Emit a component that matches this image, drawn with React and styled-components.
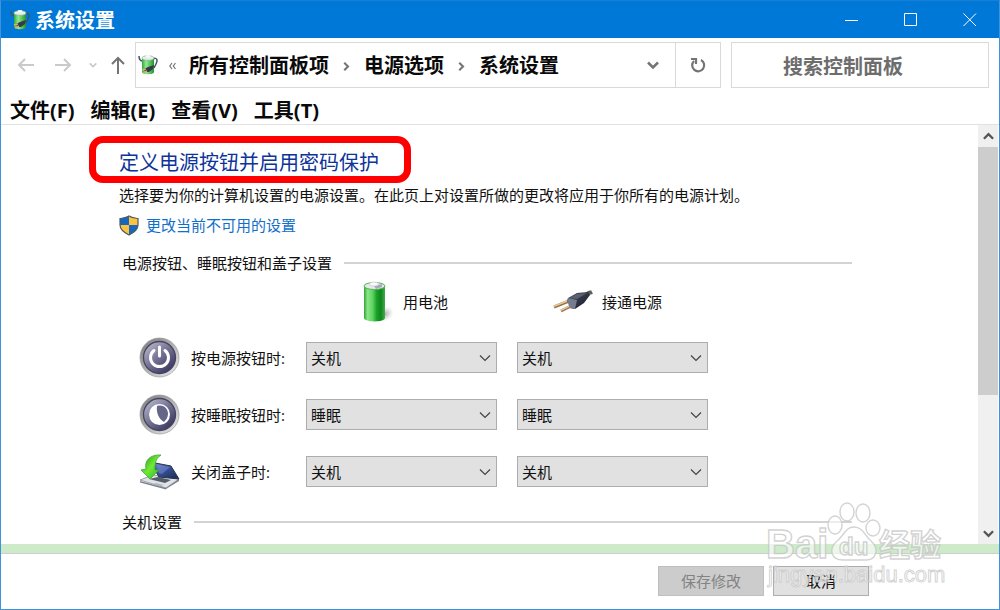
import styled, { createGlobalStyle } from 'styled-components';

const GlobalStyle = createGlobalStyle`
  * { box-sizing: border-box; }

  body {
    margin: 0;
    background: #fff;
    color: #111;
    font-family: 'Open Sans', 'Noto Sans CJK SC', sans-serif;
    font-size: 15px;
    line-height: 24px;
  }

  button, input, select { font: inherit; color: inherit; }
  svg { display: block; flex-shrink: 0; }
`;

const Window = styled.div`
  position: relative;
  display: flex;
  flex-direction: column;
  height: 100vh;
  border: 1px solid #3f93da;
  border-top-color: #1a7fd3;
`;

const TitleBar = styled.header`
  display: flex;
  align-items: center;
  height: 37px;
  flex-shrink: 0;
  padding-left: 9px;
  background: #0078d7;
  color: #fff;
`;

const Title = styled.h1`
  flex: 1;
  margin: 0;
  padding: 2px 0 0 5px;
  font-size: 20px;
  font-weight: 700;
`;

const WindowButton = styled.button`
  display: flex;
  align-items: center;
  justify-content: center;
  width: 59px;
  height: 37px;
  padding: 0;
  border: 0;
  background: none;
`;

const Toolbar = styled.div`
  display: flex;
  align-items: center;
  flex-shrink: 0;
  padding: 4px 10px 0 12px;
`;

const NavButton = styled.button`
  display: flex;
  align-items: center;
  justify-content: center;
  width: ${(p) => p.$width || 24}px;
  height: 32px;
  margin-right: ${(p) => p.$gap || 0}px;
  padding: 0;
  border: 0;
  background: none;
  color: ${(p) => (p.disabled ? '#cacaca' : '#747474')};
`;

const AddressBar = styled.div`
  display: flex;
  align-items: center;
  flex: 1;
  height: 46px;
  margin-left: 5px;
  padding-left: 2px;
  border: 1px solid #d9d9d9;
`;

const Crumbs = styled.nav`
  display: flex;
  align-items: center;
  flex: 1;
  gap: 13px;
  padding: 2px 0 0 11px;
  color: #747474;
`;

const Crumb = styled.a`
  color: #0a0a0a;
  font-size: 20px;
  font-weight: 700;
  text-decoration: none;
  white-space: nowrap;
`;

const RefreshButton = styled.button`
  display: flex;
  align-items: center;
  justify-content: center;
  width: 45px;
  height: 44px;
  padding: 0;
  border: 0;
  border-left: 1px solid #d9d9d9;
  background: none;
`;

const SearchInput = styled.input`
  width: 258px;
  height: 46px;
  margin-left: 10px;
  padding: 2px 0 0 51px;
  border: 1px solid #d9d9d9;
  background: #fff;
  font-size: 20px;
  font-weight: 700;

  &::placeholder { color: #6d6d6d; opacity: 1; }
`;

const MenuBar = styled.div`
  display: flex;
  flex-shrink: 0;
  gap: 16px;
  padding: 11px 9px 1px;
  border-bottom: 1px solid #e2e2e2;
`;

const MenuItem = styled.button`
  padding: 0;
  border: 0;
  background: none;
  color: #0a0a0a;
  font-size: 20px;
  font-weight: 700;
  line-height: 24px;
`;

const Body = styled.div`
  display: flex;
  flex: 1;
  min-height: 0;
`;

const Main = styled.main`
  flex: 1;
  overflow: hidden;
  padding: 11px 126px 0 118px;
`;

const Heading = styled.h2`
  width: fit-content;
  margin: 0 0 0 -30px;
  padding: 8px 25px 1px 23px;
  border: 7px solid #fe0000;
  border-radius: 14px;
  color: #0d3499;
  font-size: 20px;
  font-weight: 400;
  line-height: 24px;
`;

const Description = styled.p`
  margin: 0;
`;

const ShieldLink = styled.a`
  display: flex;
  align-items: center;
  gap: 7px;
  width: fit-content;
  margin-top: 6px;
  color: #0f6fcb;
  text-decoration: none;
`;

const SectionTitle = styled.h3`
  display: flex;
  align-items: center;
  gap: 12px;
  margin: ${(p) => p.$top}px 0 0 3px;
  font-size: 15px;
  font-weight: 400;

  &::after {
    content: '';
    flex: 1;
    height: 2px;
    background: #d3d3d3;
  }
`;

const Settings = styled.div`
  display: grid;
  grid-template-columns: 52px 115px 191px 211px;
  grid-template-rows: 54px;
  grid-auto-rows: 57px;
  align-items: center;
  margin-left: 20px;
`;

const SourceLabel = styled.div`
  display: flex;
  align-items: center;
  grid-column: ${(p) => p.$column};
  gap: 9px;
  padding-left: 56px;
`;

const SelectBox = styled.div`
  position: relative;
  margin-left: ${(p) => (p.$second ? 20 : 0)}px;

  svg {
    position: absolute;
    top: 10px;
    right: 6px;
    pointer-events: none;
  }
`;

const Select = styled.select`
  display: block;
  width: 100%;
  height: 31px;
  padding: 0 24px 0 4px;
  border: 1px solid #adadad;
  border-radius: 0;
  background: #e1e1e1;
  appearance: none;
`;

const ScrollBar = styled.div`
  display: flex;
  flex-direction: column;
  width: 20px;
  margin-right: 1px;
  background: #f0f0f0;
`;

const ScrollButton = styled.button`
  display: flex;
  align-items: center;
  justify-content: center;
  height: 22px;
  padding: 0;
  border: 0;
  background: none;
`;

const ScrollTrack = styled.div`
  flex: 1;
`;

const ScrollThumb = styled.div`
  height: 66%;
  background: #cdcdcd;
`;

const GreenStrip = styled.div`
  flex-shrink: 0;
  height: 10px;
  border-bottom: 1px solid #c9d2c8;
  background: #cdebc9;
`;

const Footer = styled.footer`
  display: flex;
  justify-content: flex-end;
  flex-shrink: 0;
  gap: 9px;
  padding: 12px 130px 13px 0;
`;

const FooterButton = styled.button`
  width: ${(p) => p.$width}px;
  height: 30px;
  padding: 0;
  border: 1px solid ${(p) => (p.disabled ? '#bfbfbf' : '#adadad')};
  background: ${(p) => (p.disabled ? '#cccccc' : '#e1e1e1')};
  color: ${(p) => (p.disabled ? '#838383' : '#111')};
`;

const Watermark = styled.svg`
  position: absolute;
  right: 50px;
  bottom: 16px;
  pointer-events: none;
`;

const Chevron = ({ d, size = 12, width = 2, color = 'currentColor' }) => (
  <svg width={size} height={size} viewBox="0 0 12 12" fill="none" stroke={color} strokeWidth={width}>
    <path d={d} />
  </svg>
);

const DOWN = 'M1 3.5 6 8.5 11 3.5';
const UP = 'M1 8.5 6 3.5 11 8.5';
const RIGHT = 'M3 1 8 6 3 11';

const PowerIcon = () => (
  <svg width="20" height="22" viewBox="0 0 20 22">
    <defs>
      <linearGradient id="can">
        <stop offset="0" stopColor="#2fa83b" />
        <stop offset=".35" stopColor="#8fec8e" />
        <stop offset="1" stopColor="#249331" />
      </linearGradient>
    </defs>
    <path d="M1 2c0 4 2 5 4 5M15 5c4-2 5 1 3 5l-2 4" fill="none" stroke="#3d5868" strokeWidth="1.5" />
    <path d="M4 4v14c0 3 12 3 12 0V4z" fill="url(#can)" />
    <ellipse cx="10" cy="4" rx="6" ry="2.3" fill="#e5f0e8" stroke="#95aaa0" strokeWidth=".7" />
    <ellipse cx="10" cy="2.3" rx="2.5" ry="1.3" fill="#f8f8f8" />
    <path d="m6 15 4-2 6-2-1 4-4 3-4 0z" fill="#343a48" />
    <path d="m4 16 4-1M5 19l4-2" stroke="#d4ad75" strokeWidth="1.4" />
  </svg>
);

const Shield = () => (
  <svg width="20" height="21" viewBox="0 0 20 21">
    <path d="M10 1C7 3 4 3 1 3.5V10c0 5 5 8 9 10z" fill="#1668bf" />
    <path d="M10 1c3 2 6 2 9 2.5V10H10z" fill="#fcc240" />
    <path d="M1 10h9v10C6 18 1 15 1 10z" fill="#fcc240" />
    <path d="M10 10h9c0 5-5 8-9 10z" fill="#1668bf" />
    <path d="M10 1C7 3 4 3 1 3.5V10c0 5 5 8 9 10 4-2 9-5 9-10V3.5C16 3 13 3 10 1z" fill="none" stroke="#4d5963" strokeWidth="1.2" />
  </svg>
);

const Battery = () => (
  <svg width="32" height="42" viewBox="0 0 32 42">
    <defs>
      <linearGradient id="cell">
        <stop offset="0" stopColor="#2fa437" />
        <stop offset=".17" stopColor="#8be588" />
        <stop offset=".42" stopColor="#5bd35e" />
        <stop offset=".6" stopColor="#1c9f2b" />
        <stop offset=".8" stopColor="#0f861d" />
        <stop offset="1" stopColor="#43ac48" />
      </linearGradient>
      <radialGradient id="shade">
        <stop offset="0" stopColor="#777" stopOpacity=".6" />
        <stop offset="1" stopColor="#aaa" stopOpacity="0" />
      </radialGradient>
    </defs>
    <ellipse cx="23" cy="33" rx="9" ry="7" fill="url(#shade)" transform="rotate(-30 23 33)" />
    <path d="M2 5v32c0 4.500 21 4.500 21 0V5z" fill="url(#cell)" />
    <ellipse cx="12.500" cy="5" rx="10.500" ry="3.500" fill="#e6e7ef" stroke="#50b750" />
    <path d="m12 5 8-2v3l-6 2z" fill="#a8a9c0" />
    <ellipse cx="12" cy="3" rx="4.500" ry="2" fill="#fafafa" stroke="#c1c2cb" strokeWidth=".6" />
  </svg>
);

const Plug = () => (
  <svg width="40" height="24" viewBox="0 0 40 24">
    <defs>
      <linearGradient id="plug" x2="1" y2="1">
        <stop offset="0" stopColor="#4c5062" />
        <stop offset=".5" stopColor="#303443" />
        <stop offset="1" stopColor="#171a28" />
      </linearGradient>
    </defs>
    <path d="m1 17 15-6M8 21l14-7" stroke="#967149" strokeWidth="3" />
    <path d="m1 16.300 15-6M8 20.300l14-7" stroke="#eec795" strokeWidth="1.500" />
    <path d="M34 5c1-3 3-2 5-3" stroke="#5d5d58" strokeWidth="4" fill="none" />
    <path d="m15 8 9-5 11-1 2 3-6 8-9 6-5-1 1-4-4-2z" fill="url(#plug)" />
    <path d="m15 8 9 2-2 9-5-1-3-7z" fill="#777b90" />
    <path d="m16 8 8-4 10-1-10 6z" fill="#5b6072" />
  </svg>
);

// round metal button shared by the power and sleep rows
const RoundIcon = ({ id, children }) => (
  <svg width="41" height="41" viewBox="0 0 41 41">
    <defs>
      <linearGradient id={`${id}-rim`} x2="1" y2="1">
        <stop offset="0" stopColor="#777" />
        <stop offset=".45" stopColor="#aaa" />
        <stop offset="1" stopColor="#f0f0f0" />
      </linearGradient>
      <linearGradient id={`${id}-face`} x1=".1" y1=".1" x2=".8" y2=".9">
        <stop offset="0" stopColor="#b4b4c8" />
        <stop offset=".5" stopColor="#747394" />
        <stop offset="1" stopColor="#3d3b63" />
      </linearGradient>
    </defs>
    <circle cx="20.500" cy="20.500" r="19.500" fill={`url(#${id}-rim)`} stroke="#999" strokeWidth=".7" />
    <circle cx="20.500" cy="20.500" r="16" fill={`url(#${id}-face)`} stroke="#454461" strokeWidth="1.300" />
    {children}
  </svg>
);

const PowerButtonIcon = () => (
  <RoundIcon id="power">
    <path d="M15 13.500a9 9 0 1 0 11 0M20.500 10v9" fill="none" stroke="#fff" strokeWidth="3" strokeLinecap="round" />
  </RoundIcon>
);

const SleepButtonIcon = () => (
  <RoundIcon id="sleep">
    <circle cx="20.500" cy="20.500" r="10.500" fill="#fff" />
    <path d="M18 12c7-2 11 3 11 8 0 3-2 6-4 8-5-3-8-9-7-16z" fill="#66658a" />
  </RoundIcon>
);

const LidIcon = () => (
  <svg width="41" height="36" viewBox="0 0 41 36">
    <defs>
      <linearGradient id="lid" x2="1" y2="1">
        <stop offset="0" stopColor="#7186c5" />
        <stop offset=".45" stopColor="#3a55a0" />
        <stop offset="1" stopColor="#182849" />
      </linearGradient>
      <linearGradient id="arrow" x2="1" y2="1">
        <stop offset="0" stopColor="#258d1b" />
        <stop offset=".5" stopColor="#70ea38" />
        <stop offset="1" stopColor="#2caa1c" />
      </linearGradient>
    </defs>
    <path d="m1 26 13-5 26 4-13 9z" fill="#dfe3e8" stroke="#868e98" strokeWidth=".8" />
    <path d="m1 27 26 7v1.500L1 28.500zM27 34l13-9v2l-13 8z" fill="#7a828e" />
    <path d="m10 25 9-2 13 3-6 3z" fill="#555d68" />
    <path d="m17 29 8 2-4 1-7-2z" fill="#aeb6bf" />
    <path d="m11 8 21 4 8 13-20-2z" fill="url(#lid)" stroke="#29354c" />
    <path d="m17 10 14 3-8 7-3-1z" fill="#8da1df" opacity=".4" />
    <path d="M22 1c-6 4-6 9-6 15h4l-9 9-9-9 5-1C5 7 11 0 22 1z" fill="url(#arrow)" stroke="#389e2a" strokeWidth=".7" />
  </svg>
);

const options = ['不采取任何操作', '睡眠', '休眠', '关机'];

const rows = [
  { label: '按电源按钮时:', value: '关机', Icon: PowerButtonIcon },
  { label: '按睡眠按钮时:', value: '睡眠', Icon: SleepButtonIcon },
  { label: '关闭盖子时:', value: '关机', Icon: LidIcon },
];

const ActionSelect = ({ id, label, value, second }) => (
  <SelectBox $second={second}>
    <Select id={id} aria-label={label} defaultValue={value}>
      {options.map((o) => (
        <option key={o}>{o}</option>
      ))}
    </Select>
    <Chevron d={DOWN} width={1.2} color="#444" />
  </SelectBox>
);

const SettingRow = ({ label, value, Icon, index }) => (
  <>
    <Icon />
    <label htmlFor={`battery-${index}`}>{label}</label>
    <ActionSelect id={`battery-${index}`} label={`${label} 用电池`} value={value} />
    <ActionSelect id={`plugged-${index}`} label={`${label} 接通电源`} value={value} second />
  </>
);

export default () => {
  return (
    <Window>
      <GlobalStyle />

      <TitleBar>
        <PowerIcon />
        <Title>系统设置</Title>
        <WindowButton aria-label="最小化">
          <svg width="14" height="14" stroke="#fff"><path d="M0 7.500h13" /></svg>
        </WindowButton>
        <WindowButton aria-label="最大化">
          <svg width="14" height="14" fill="none" stroke="#fff"><path d="M.5.5h12v12H.5z" /></svg>
        </WindowButton>
        <WindowButton aria-label="关闭">
          <svg width="14" height="14" stroke="#fff"><path d="m.5.500 12.500 12.500M13 .5.500 13" /></svg>
        </WindowButton>
      </TitleBar>

      <Toolbar>
        <NavButton aria-label="后退" disabled $gap={14}>
          <svg width="17" height="14" fill="none" stroke="currentColor" strokeWidth="2"><path d="M17 7H2M8 1 2 7l6 6" /></svg>
        </NavButton>
        <NavButton aria-label="前进" disabled $gap={8}>
          <svg width="17" height="14" fill="none" stroke="currentColor" strokeWidth="2"><path d="M0 7h15M9 1l6 6-6 6" /></svg>
        </NavButton>
        <NavButton aria-label="最近的位置" disabled $width={20} $gap={3}>
          <Chevron d={DOWN} size={8} width={2.5} />
        </NavButton>
        <NavButton aria-label="上移">
          <svg width="14" height="18" fill="none" stroke="currentColor" strokeWidth="2"><path d="M7 18V2M1 8l6-6 6 6" /></svg>
        </NavButton>
        <AddressBar>
          <PowerIcon />
          <Crumbs aria-label="地址">
            <svg width="7" height="8" fill="none" stroke="currentColor" strokeWidth="1.200"><path d="M3 1 .8 4 3 7M6.500 1 4.300 4l2.200 3" /></svg>
            <Crumb href="#panel">所有控制面板项</Crumb>
            <Chevron d={RIGHT} size={9} width={2.8} />
            <Crumb href="#power">电源选项</Crumb>
            <Chevron d={RIGHT} size={9} width={2.8} />
            <Crumb href="#system">系统设置</Crumb>
          </Crumbs>
          <NavButton aria-label="展开地址" $width={44}>
            <Chevron d={DOWN} width={2.5} />
          </NavButton>
          <RefreshButton aria-label="刷新">
            <svg width="16" height="16" viewBox="0 0 16 16" fill="none" stroke="#747474" strokeWidth="2.2">
              <path d="M11 3a6 6 0 1 1-7 1M1 2h5v5" />
            </svg>
          </RefreshButton>
        </AddressBar>
        <SearchInput type="search" placeholder="搜索控制面板" aria-label="搜索控制面板" />
      </Toolbar>

      <MenuBar>
        <MenuItem>文件(F)</MenuItem>
        <MenuItem>编辑(E)</MenuItem>
        <MenuItem>查看(V)</MenuItem>
        <MenuItem>工具(T)</MenuItem>
      </MenuBar>

      <Body>
        <Main>
          <Heading>定义电源按钮并启用密码保护</Heading>
          <Description>
            选择要为你的计算机设置的电源设置。在此页上对设置所做的更改将应用于你所有的电源计划。
          </Description>
          <ShieldLink href="#unlock">
            <Shield />
            更改当前不可用的设置
          </ShieldLink>

          <SectionTitle $top={14}>电源按钮、睡眠按钮和盖子设置</SectionTitle>
          <Settings>
            <SourceLabel $column="3">
              <Battery />
              用电池
            </SourceLabel>
            <SourceLabel $column="4">
              <Plug />
              接通电源
            </SourceLabel>
            {rows.map((row, i) => (
              <SettingRow key={row.label} index={i} {...row} />
            ))}
          </Settings>

          <SectionTitle $top={10}>关机设置</SectionTitle>
        </Main>

        <ScrollBar>
          <ScrollButton aria-label="向上滚动"><Chevron d={UP} size={11} width={2.5} color="#555" /></ScrollButton>
          <ScrollTrack>
            <ScrollThumb />
          </ScrollTrack>
          <ScrollButton aria-label="向下滚动"><Chevron d={DOWN} size={11} width={2.5} color="#555" /></ScrollButton>
        </ScrollBar>
      </Body>

      <GreenStrip />
      <Footer>
        <FooterButton disabled $width={106}>保存修改</FooterButton>
        <FooterButton $width={96}>取消</FooterButton>
      </Footer>

      <Watermark
        width="184"
        height="92"
        viewBox="0 0 184 92"
        fill="#fff"
        fillOpacity=".6"
        stroke="#c4c4c4"
        strokeOpacity=".75"
        strokeWidth="1.4"
        fontFamily="'Liberation Sans', 'Noto Sans CJK SC', sans-serif"
        fontWeight="700"
        aria-hidden="true"
      >
        <text x="1" y="57" fontSize="40">Bai</text>
        <ellipse cx="82" cy="11" rx="7" ry="9" />
        <ellipse cx="98" cy="12" rx="7" ry="9" />
        <ellipse cx="70" cy="24" rx="7" ry="9" />
        <ellipse cx="108" cy="27" rx="7" ry="8" />
        <path d="M89 26c9 0 11 9 17 14 9 8 5 19-5 19H78c-12 0-15-11-6-19 7-5 8-14 17-14z" />
        <text x="74" y="54" fontSize="24">du</text>
        <text x="114" y="55" fontSize="31">经验</text>
        <text x="3" y="81" fontSize="22" fontWeight="400" strokeWidth="1">jingyan.baidu.com</text>
      </Watermark>
    </Window>
  );
};
